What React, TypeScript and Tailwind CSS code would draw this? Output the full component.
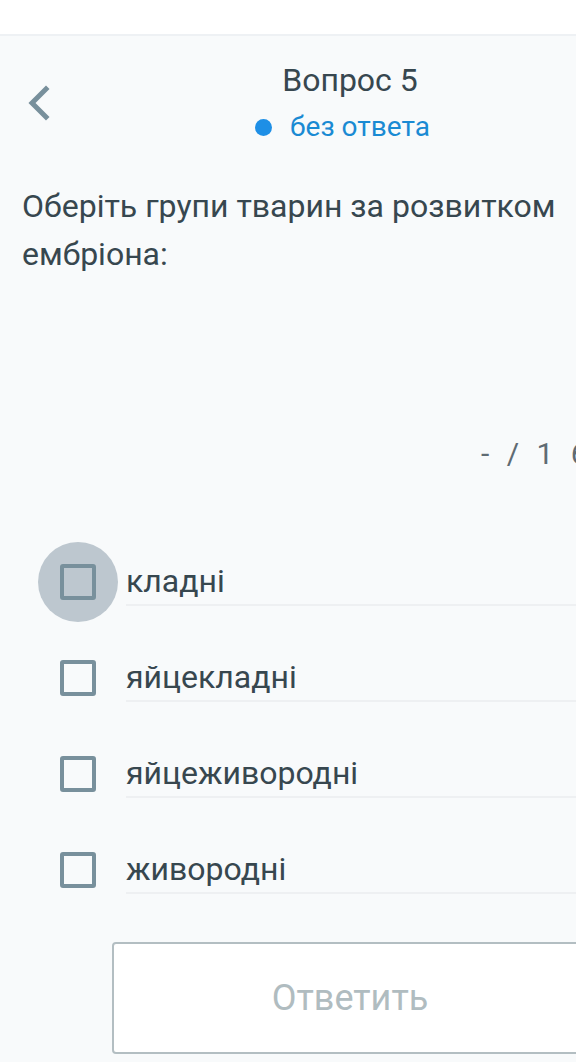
const options = ['кладні', 'яйцекладні', 'яйцеживородні', 'живородні'];

const Checkbox = ({ focused }: { focused?: boolean }) => (
    <div className="relative flex h-[96px] w-[104px] shrink-0 items-center justify-center">
        {focused && (
            <div className="absolute left-[38px] top-[8px] h-[80px] w-[80px] rounded-full bg-[#bdc7cf]" />
        )}
        <div className="relative ml-[52px] h-[36px] w-[36px] rounded-[3px] border-[4px] border-[#78909c]" />
    </div>
);

const App = () => {
    return (
        <div
            className="h-[1062px] w-[576px] overflow-hidden bg-[#f8fafb] text-[#37474f]"
            style={{ fontFamily: 'Roboto, "Noto Sans", sans-serif' }}
        >
            <div className="w-[700px]">
                <div className="h-[36px] border-b-2 border-[#eef1f4] bg-white" />

                <div className="relative flex flex-col items-center pt-[24px]">
                    <button className="absolute left-[24px] top-[47px] text-[#78909c]">
                        <svg width="30" height="40" viewBox="0 0 30 40" fill="none">
                            <path
                                d="M22 6 L8 20 L22 34"
                                stroke="currentColor"
                                strokeWidth="5"
                                strokeLinecap="square"
                            />
                        </svg>
                    </button>
                    <h2 className="text-[32px] leading-[40px]">Вопрос 5</h2>
                    <div className="mr-[15px] mt-[10px] flex items-center gap-[18px] text-[28px] leading-[34px] text-[#1a8ad3]">
                        <span className="h-[17px] w-[17px] rounded-full bg-[#1e8fe6]" />
                        без ответа
                    </div>
                </div>

                <p className="mt-[38px] w-[580px] px-[22px] text-[32px] leading-[48px]">
                    Оберіть групи тварин за розвитком ембріона:
                </p>

                <div className="mt-[158px] whitespace-nowrap pl-[481px] text-[30px] leading-[36px] tracking-[5px] text-[#5f6b73]">
                    - / 1 6
                </div>

                <div className="mt-[62px] flex flex-col">
                    {options.map((o, i) => (
                        <div key={o} className="flex items-center">
                            <Checkbox focused={i === 0} />
                            <div className="ml-[22px] flex h-[48px] flex-1 items-center border-b-2 border-[#eef0f2] text-[32px]">
                                {o}
                            </div>
                        </div>
                    ))}
                </div>

                <div className="mt-[24px] px-[112px]">
                    <button className="flex h-[112px] w-full items-center justify-center rounded-[4px] border-2 border-[#b3bec2] bg-white text-[36px] text-[#b0bcc0]">
                        Ответить
                    </button>
                </div>
            </div>
        </div>
    );
};

export default App;
